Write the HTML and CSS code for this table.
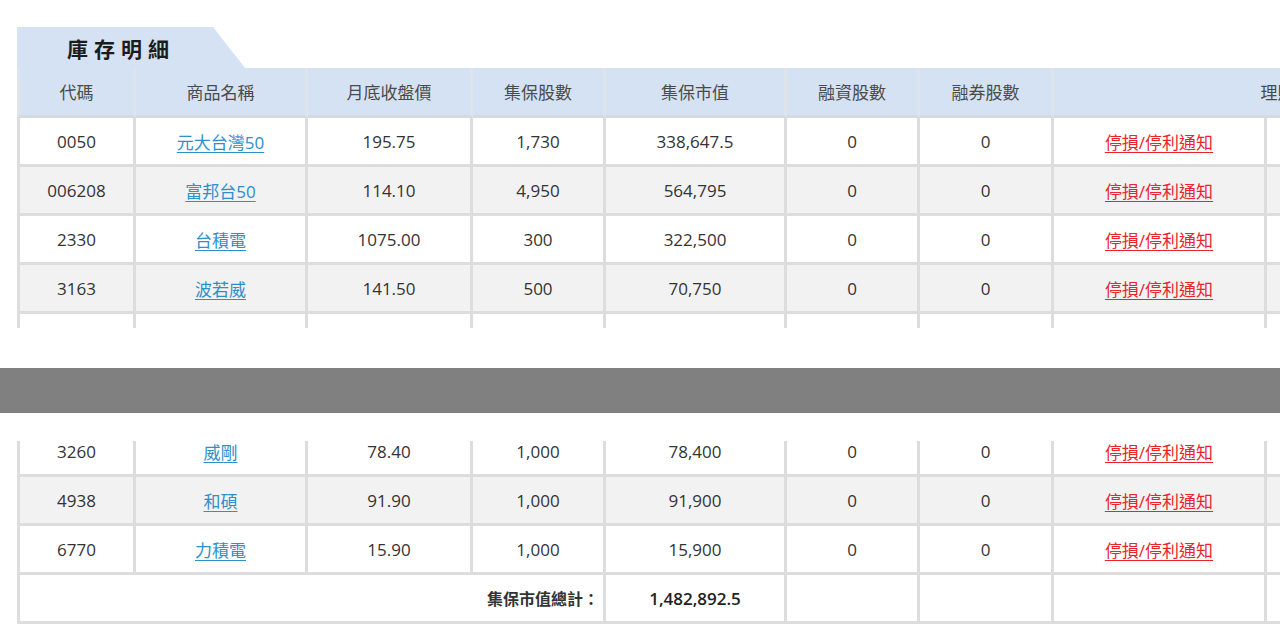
FILE: index.html
```html
<!DOCTYPE html>
<html lang="zh-Hant">
<head>
<meta charset="utf-8">
<title>庫存明細</title>
<link rel="stylesheet" href="styles.css">
</head>
<body>
<div class="page">
  <section class="sec-top">
    <div class="tab"><span class="tab-text">庫存明細</span></div>
    <div class="table">
      <div class="row head">
        <div class="cell first">代碼</div>
        <div class="cell">商品名稱</div>
        <div class="cell">月底收盤價</div>
        <div class="cell">集保股數</div>
        <div class="cell">集保市值</div>
        <div class="cell">融資股數</div>
        <div class="cell">融券股數</div>
        <div class="cell span2">理財功能</div>
      </div>
      <div class="row">
        <div class="cell first">0050</div>
        <div class="cell"><a class="stock" href="#">元大台灣50</a></div>
        <div class="cell">195.75</div>
        <div class="cell">1,730</div>
        <div class="cell">338,647.5</div>
        <div class="cell">0</div>
        <div class="cell">0</div>
        <div class="cell"><a class="notify" href="#">停損/停利通知</a></div>
        <div class="cell"></div>
      </div>
      <div class="row alt">
        <div class="cell first">006208</div>
        <div class="cell"><a class="stock" href="#">富邦台50</a></div>
        <div class="cell">114.10</div>
        <div class="cell">4,950</div>
        <div class="cell">564,795</div>
        <div class="cell">0</div>
        <div class="cell">0</div>
        <div class="cell"><a class="notify" href="#">停損/停利通知</a></div>
        <div class="cell"></div>
      </div>
      <div class="row">
        <div class="cell first">2330</div>
        <div class="cell"><a class="stock" href="#">台積電</a></div>
        <div class="cell">1075.00</div>
        <div class="cell">300</div>
        <div class="cell">322,500</div>
        <div class="cell">0</div>
        <div class="cell">0</div>
        <div class="cell"><a class="notify" href="#">停損/停利通知</a></div>
        <div class="cell"></div>
      </div>
      <div class="row alt">
        <div class="cell first">3163</div>
        <div class="cell"><a class="stock" href="#">波若威</a></div>
        <div class="cell">141.50</div>
        <div class="cell">500</div>
        <div class="cell">70,750</div>
        <div class="cell">0</div>
        <div class="cell">0</div>
        <div class="cell"><a class="notify" href="#">停損/停利通知</a></div>
        <div class="cell"></div>
      </div>
      <div class="row">
        <div class="cell first"></div>
        <div class="cell"></div>
        <div class="cell"></div>
        <div class="cell"></div>
        <div class="cell"></div>
        <div class="cell"></div>
        <div class="cell"></div>
        <div class="cell"></div>
        <div class="cell"></div>
      </div>
    </div>
  </section>

  <div class="band"></div>

  <section class="sec-bottom">
    <div class="table shifted">
      <div class="row">
        <div class="cell first">3260</div>
        <div class="cell"><a class="stock" href="#">威剛</a></div>
        <div class="cell">78.40</div>
        <div class="cell">1,000</div>
        <div class="cell">78,400</div>
        <div class="cell">0</div>
        <div class="cell">0</div>
        <div class="cell"><a class="notify" href="#">停損/停利通知</a></div>
        <div class="cell"></div>
      </div>
      <div class="row alt">
        <div class="cell first">4938</div>
        <div class="cell"><a class="stock" href="#">和碩</a></div>
        <div class="cell">91.90</div>
        <div class="cell">1,000</div>
        <div class="cell">91,900</div>
        <div class="cell">0</div>
        <div class="cell">0</div>
        <div class="cell"><a class="notify" href="#">停損/停利通知</a></div>
        <div class="cell"></div>
      </div>
      <div class="row">
        <div class="cell first">6770</div>
        <div class="cell"><a class="stock" href="#">力積電</a></div>
        <div class="cell">15.90</div>
        <div class="cell">1,000</div>
        <div class="cell">15,900</div>
        <div class="cell">0</div>
        <div class="cell">0</div>
        <div class="cell"><a class="notify" href="#">停損/停利通知</a></div>
        <div class="cell"></div>
      </div>
      <div class="row total">
        <div class="cell first span4 label">集保市值總計：</div>
        <div class="cell sum">1,482,892.5</div>
        <div class="cell"></div>
        <div class="cell"></div>
        <div class="cell"></div>
        <div class="cell"></div>
      </div>
    </div>
  </section>
</div>
</body>
</html>
```

FILE: styles.css
```css
html, body {
  margin: 0;
  padding: 0;
  background: #ffffff;
  overflow: hidden;
}

body {
  font-family: "Open Sans", "Noto Sans CJK TC", sans-serif;
  font-size: 17px;
  color: #333333;
}

.page {
  width: 1280px;
  height: 643px;
  overflow: hidden;
}

.sec-top {
  height: 328px;
  box-sizing: border-box;
  padding: 27px 0 0 17px;
  overflow: hidden;
}

.tab {
  width: 228px;
  height: 41px;
  background: #d5e2f3;
  clip-path: polygon(0 0, 196px 0, 228px 100%, 0 100%);
  display: flex;
  align-items: center;
  padding-left: 50px;
  box-sizing: border-box;
}

.tab-text {
  font-family: "Noto Sans CJK TC", sans-serif;
  font-weight: 700;
  font-size: 21px;
  letter-spacing: 6px;
  color: #1c1c1c;
}

.table {
  width: 1600px;
}

.row {
  display: grid;
  grid-template-columns: 119px 172px 165px 133px 181px 133px 134px 213px 271px;
  background: #ffffff;
}

.row.alt {
  background: #f2f2f2;
}

.cell {
  height: 49px;
  box-sizing: border-box;
  border-right: 3px solid #dddddd;
  border-bottom: 3px solid #dddddd;
  display: flex;
  align-items: center;
  justify-content: center;
  white-space: nowrap;
}

.cell.first {
  border-left: 3px solid #dddddd;
}

.row.head {
  background: #d5e2f3;
  color: #4a4a4a;
}

.row.head .cell {
  height: 50px;
  border-right-color: #dfe4ea;
  border-bottom-color: #d6d9de;
}

.row.head .cell.first {
  border-left-color: #dfe4ea;
}

.span2 {
  grid-column: span 2;
}

.span4 {
  grid-column: span 4;
}

.stock {
  color: #2e8fcb;
  text-decoration: underline;
  text-underline-offset: 3px;
}

.notify {
  color: #e8242c;
  text-decoration: underline;
  text-underline-offset: 3px;
}

.band {
  margin-top: 40px;
  height: 45px;
  background: #808080;
}

.sec-bottom {
  margin-top: 28px;
  padding-left: 17px;
  overflow: hidden;
}

.table.shifted {
  margin-top: -13px;
}

.total .label {
  justify-content: flex-end;
  padding-right: 4px;
  font-family: "Noto Sans CJK TC", sans-serif;
  font-weight: 700;
  font-size: 16px;
  color: #333333;
}

.total .sum {
  font-weight: 600;
  color: #222222;
}
```
